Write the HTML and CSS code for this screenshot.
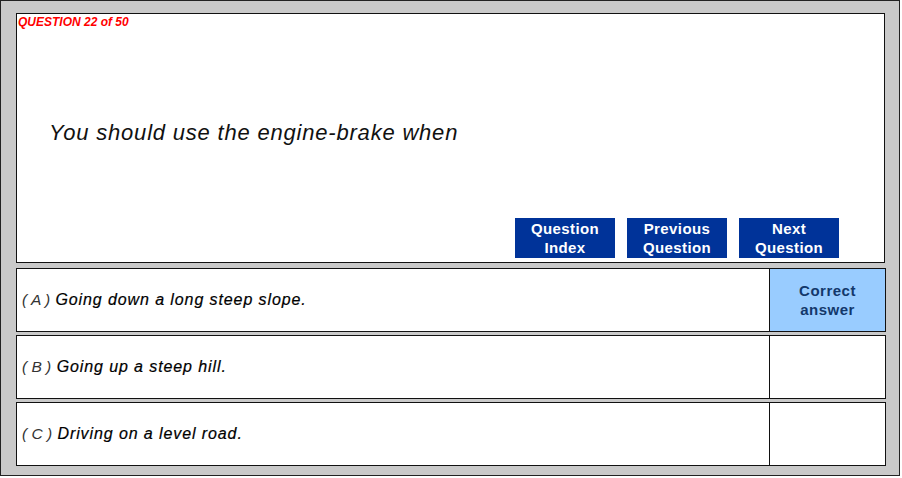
FILE: index.html
```html
<!DOCTYPE html>
<html>
<head>
<meta charset="utf-8">
<link rel="stylesheet" href="styles.css">
</head>
<body>
<div class="frame">
  <div class="qbox">
    <div class="qnum">QUESTION 22 of 50</div>
    <div class="qtext">You should use the engine-brake when</div>
    <div class="nav">
      <div class="btn">Question<br>Index</div>
      <div class="btn">Previous<br>Question</div>
      <div class="btn">Next<br>Question</div>
    </div>
  </div>
  <div class="opt">
    <div class="opt-text"><span class="lbl">( A )</span> Going down a long steep slope.</div>
    <div class="opt-mark correct">Correct<br>answer</div>
  </div>
  <div class="opt">
    <div class="opt-text"><span class="lbl">( B )</span> Going up a steep hill.</div>
    <div class="opt-mark"></div>
  </div>
  <div class="opt">
    <div class="opt-text"><span class="lbl">( C )</span> Driving on a level road.</div>
    <div class="opt-mark"></div>
  </div>
</div>
</body>
</html>
```
FILE: styles.css
```css
html, body {
  margin: 0;
  padding: 0;
  background: #ffffff;
}
body {
  font-family: "Liberation Sans", Arial, sans-serif;
}
.frame {
  box-sizing: border-box;
  width: 900px;
  height: 476px;
  border: 1px solid #222;
  background: #c9c9c9;
  padding: 12px 0 0 15px;
  display: flex;
  flex-direction: column;
}
.qbox {
  box-sizing: border-box;
  width: 869px;
  height: 250px;
  border: 1px solid #111;
  background: #fff;
  display: flex;
  flex-direction: column;
  padding: 0 45px 4px 1px;
}
.qnum {
  color: #ff0000;
  font-weight: bold;
  font-style: italic;
  font-size: 12px;
  line-height: 14px;
  margin-top: 1px;
}
.qtext {
  font-style: italic;
  font-size: 22px;
  line-height: 26px;
  letter-spacing: 0.8px;
  color: #111;
  margin-top: 91px;
  padding-left: 31px;
}
.nav {
  margin-top: auto;
  display: flex;
  justify-content: flex-end;
  gap: 12px;
}
.btn {
  width: 100px;
  height: 40px;
  background: #003399;
  color: #fff;
  font-weight: bold;
  font-size: 15px;
  line-height: 19px;
  letter-spacing: 0.4px;
  text-align: center;
  display: flex;
  align-items: center;
  justify-content: center;
}
.opt {
  box-sizing: border-box;
  width: 870px;
  height: 64px;
  border: 1px solid #111;
  background: #fff;
  display: flex;
  margin-top: 3px;
}
.qbox + .opt {
  margin-top: 5px;
}
.opt-text {
  flex: 1;
  display: flex;
  align-items: center;
  padding-left: 5px;
  font-style: italic;
  font-size: 16px;
  letter-spacing: 0.9px;
  color: #000;
  -webkit-text-stroke: 0.2px #000;
  white-space: pre;
}
.lbl {
  font-size: 15.5px;
  letter-spacing: 0;
  color: #333;
  -webkit-text-stroke: 0;
}
.opt-mark {
  box-sizing: border-box;
  width: 116px;
  border-left: 1px solid #111;
  display: flex;
  align-items: center;
  justify-content: center;
  text-align: center;
  font-weight: bold;
  font-size: 15px;
  line-height: 19px;
  letter-spacing: 0.5px;
  color: #13386b;
}
.opt-mark.correct {
  background: #99ccff;
}
```
